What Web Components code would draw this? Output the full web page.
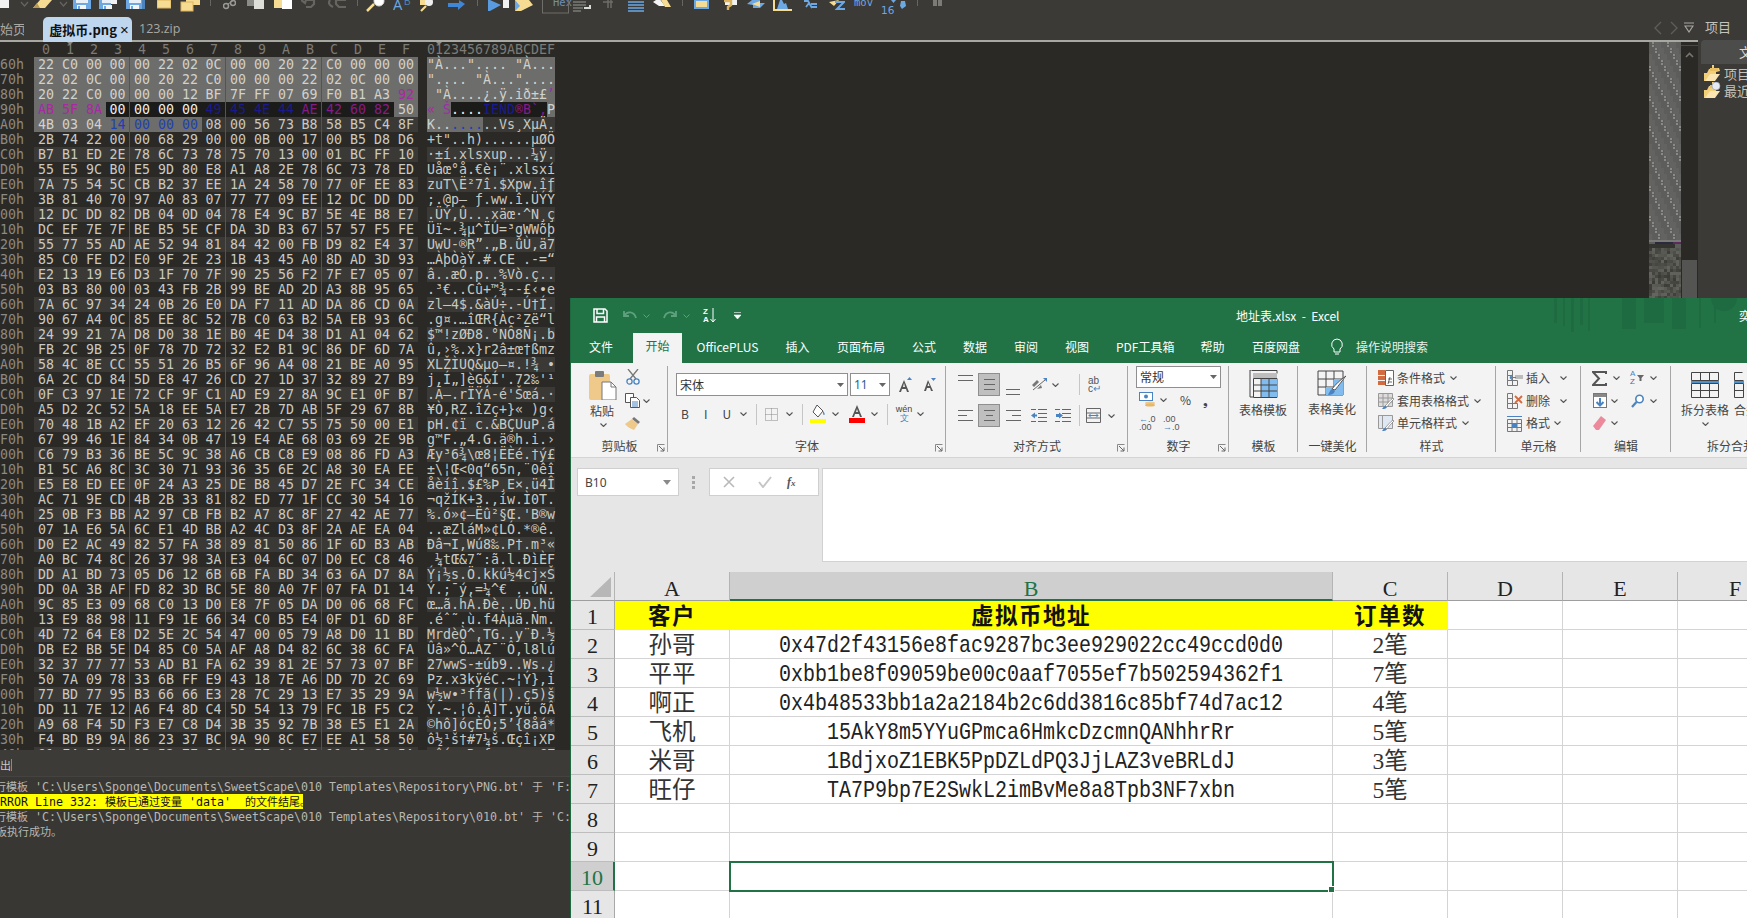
<!DOCTYPE html>
<html><head><meta charset="utf-8"><title>010 Editor + Excel</title>
<style>
html,body{margin:0;padding:0;width:1747px;height:918px;overflow:hidden;background:#2a2926}
body{position:relative;font-family:"Noto Sans CJK SC","Noto Sans",sans-serif}
</style></head><body>
<ed-app></ed-app>
<excel-window></excel-window>
<script>
function def(name,css,html,init){customElements.define(name,class extends HTMLElement{connectedCallback(){if(this.shadowRoot)return;const s=this.attachShadow({mode:'open'});s.innerHTML='<style>'+css+'</style>'+html(this);if(init)init(s,this);}});}
const CJK='"Noto Sans CJK SC","Noto Sans",sans-serif';
const svg=(w,h,b,st='')=>`<svg width="${w}" height="${h}" viewBox="0 0 ${w} ${h}" style="flex:none;display:block;${st}">${b}</svg>`;
/* ---------- 010 toolbar ---------- */
const chev='<path d="M1 2l3.5 4L8 2" fill="none" stroke="#66655f" stroke-width="1.2"/>';
const bs='#6ea8e2',yl='#f6dc92',yd='#dcb35c';
const floppy=(x=0)=>`<rect x="${x}" width="18" height="9" fill="${bs}"/><rect x="${x+3}" width="12" height="3" fill="#e8eff6"/><rect x="${x+4}" y="5" width="9" height="4" fill="#f4f4f4"/><rect x="${x+5}" y="6" width="2" height="3" fill="${bs}"/>`;
const tbItems=[
[0,9,'<rect width="9" height="8" fill="#f2f2f2"/>'],[20,9,chev],
[33,19,'<path d="M0 8L7 0h12l-7 8z" fill="'+yl+'"/><path d="M0 8l4-5 3 5z" fill="#b9995a"/>'],[59,9,chev],
[73,18,floppy()],[99,18,floppy().replace('width="18"','width="12"')+'<rect x="12" width="6" height="4" fill="#f2f2f2"/>'],
[126,19,floppy()+'<rect x="16" width="3" height="9" fill="#4d83bb"/>'],
[157,14,'<rect width="14" height="8" fill="'+yl+'" stroke="'+yd+'"/>'],
[180,20,'<rect x="6" width="14" height="5" fill="'+yl+'"/><rect y="2" x="1" width="12" height="9" fill="'+yl+'" stroke="'+yd+'"/>'],
[210,1,'<rect width="1" height="6" fill="#66655f"/>'],
[223,13,'<circle cx="3" cy="6" r="2.5" fill="none" stroke="#9a9a96" stroke-width="1.5"/><circle cx="10" cy="3" r="2.5" fill="none" stroke="#9a9a96" stroke-width="1.5"/><path d="M5 4l6 -4" stroke="#9a9a96"/>'],
[247,17,'<rect width="9" height="6" fill="#8b8b87"/><rect x="7" width="10" height="9" fill="#dfdfda"/>'],
[274,18,'<rect width="10" height="8" fill="'+yl+'"/><rect x="8" width="10" height="9" fill="#fff"/>'],
[301,15,'<path d="M0 0l4 3 1-3h8v4l-3 3H5" fill="none" stroke="#66655f" stroke-width="2.2"/>'],
[328,18,'<path d="M18 0h-10v4l3 3h7M2 0c-2 3 -1 5 3 7" fill="none" stroke="#66655f" stroke-width="2.2"/>'],
[357,1,'<rect width="1" height="6" fill="#66655f"/>'],
[366,19,'<circle cx="13" cy="1" r="5" fill="#fff" stroke="#ddd"/><path d="M1 11l7-7" stroke="'+yl+'" stroke-width="2.5"/>'],
[393,20,'<text x="0" y="10" font-family="Liberation Sans" font-size="14" fill="'+bs+'">A</text><text x="11" y="5" font-family="Liberation Sans" font-size="10" fill="#4d83bb">B</text>'],
[420,14,'<rect width="10" height="5" fill="'+yl+'"/><circle cx="9" cy="2" r="4" fill="#eee"/><path d="M1 11l5-5" stroke="'+yl+'" stroke-width="2.2"/>'],
[448,17,'<path d="M0 3h11V0l6 4-7 6V7H0z" fill="#3f86d6"/>'],
[477,1,'<rect width="1" height="6" fill="#66655f"/>'],
[488,13,'<path d="M0 0h2l11 5-11 6H0z" fill="#5a9be0"/>'],[503,7,'<rect width="6" height="8" fill="#f2f2f2"/>'],
[515,18,'<path d="M0 0h14l4 5-12 6H0z" fill="'+yl+'"/><path d="M0 0l5 6-5 5z" fill="'+bs+'"/>'],
[542,1,'<rect width="1" height="6" fill="#66655f"/>'],
[549,27,'<rect x=".5" y="-2" width="26" height="15" fill="none" stroke="#6e6d67"/>'],
[580,18,'<path d="M0 2h13M0 5h13M0 8h10M0 11h8" stroke="#9a9a96"/><path d="M17 5v3h-6" fill="none" stroke="#dcdcd6" stroke-width="2"/>'],
[610,10,'<path d="M0 2h10M5 0v8M8 0v8" stroke="#6e6d67" stroke-width="1.5"/>'],
[635,16,'<path d="M0 2h16M0 5h16M0 8h16M0 11h16" stroke="'+bs+'" stroke-width="1.4"/>'],
[660,18,'<path d="M0 2l6-4 6 8H6z" fill="#f4f4f4"/><path d="M8 0l6 0 4 7H12z" fill="'+yl+'"/>'],
[689,1,'<rect width="1" height="6" fill="#66655f"/>'],
[701,15,'<rect width="15" height="9" fill="'+bs+'"/><path d="M2 1h11v6H2z" fill="'+yl+'"/>'],
[728,16,'<rect x="4" width="12" height="5" fill="#f2f2f2"/><path d="M3 1h7v4l-3 2v3" fill="none" stroke="'+yd+'" stroke-width="2.4"/>'],
[754,18,'<path d="M0 4l5-4h8v3l5 0-5 5H6V5z" fill="'+bs+'"/><path d="M5 4l8-3v6z" fill="'+yl+'"/>'],
[780,20,'<path d="M1 0v10h18" fill="none" stroke="'+yl+'" stroke-width="2"/><path d="M4 9l3-9h2l2 4 2-1 2 6z" fill="'+bs+'"/>'],
[810,15,'<path d="M1 1h4l4 7M3 7l3-4M8 4h6M8 7h6" fill="none" stroke="'+bs+'" stroke-width="1.8"/>'],
[836,16,'<path d="M0 2l5 4 5-6z" fill="'+yl+'"/><path d="M6 2h9l-7 7h8" fill="none" stroke="'+bs+'" stroke-width="2"/>'],
[888,20,'<path d="M14 9l4-3 -1-5-4 0-1 5z" fill="'+bs+'"/><path d="M3 0h5l-2.5 3z" fill="'+bs+'"/>'],
[917,1,'<rect width="1" height="6" fill="#66655f"/>'],
[933,9,'<rect width="4" height="6" fill="#7c7b76"/><rect x="5" width="4" height="6" fill="#7c7b76"/>'],
];
def('ed-toolbar',':host{display:flex;height:16px;background:#3b3a36;overflow:hidden;position:relative}span{flex:none;font:10.5px "DejaVu Sans Mono",monospace;color:#6ea8e2;line-height:10px;height:10px}.hex{margin-top:-3px}',()=>{
 let p=0,o='';
 for(const[x,w,b]of tbItems){
  if(x===549){o+=`<span class="hex" style="margin-left:${x-p+4}px;width:20px;color:#6f8fb2;margin-right:-${w-4-20+4}px">Hex</span>`;o+=svg(w,16,b,`margin-left:-24px`);p=x+w;continue;}
  if(x===888){o+=`<span style="margin-left:${861-p}px;width:20px;margin-top:-3px">mov</span>`;p=881;o+=`<span style="margin-left:7px;width:0;margin-top:5px;font-family:'DejaVu Sans'">16</span>`;}
  o+=svg(w,16,b,`margin-left:${x-p}px`);p=x+w;}
 return o;});
/* ---------- tabs ---------- */
def('ed-tabs',`:host{display:flex;height:24px;background:#3b3a36;border-bottom:2px solid #a8a8a3;align-items:center;font:13px ${CJK};color:#a9a8a2}
.home{width:24px;margin-left:0;overflow:hidden;white-space:nowrap}
.act{width:89px;height:25px;margin:1px 0 -2px 19px;background:#bfd6ef;border-radius:5px 5px 0 0;color:#111;font-weight:700;display:flex;align-items:center;justify-content:center;gap:3px;font-size:13px;box-sizing:border-box;padding-left:3px}
.act i{font:400 15px "Liberation Sans";}
.z{margin-left:7px;font:12.5px "Open Sans",sans-serif;width:41px;white-space:nowrap}
.nav{margin-left:auto;display:flex;align-items:center;margin-right:4px}`,()=>`<span class="home">始页</span><span class="act">虚拟币.png<i>×</i></span><span class="z">123.zip</span>
<span class="nav">${svg(10,14,'<path d="M8 1L2 7l6 6" fill="none" stroke="#5e5d58" stroke-width="1.4"/>')}${svg(10,14,'<path d="M2 1l6 6-6 6" fill="none" stroke="#5e5d58" stroke-width="1.4"/>','margin-left:6px')}${svg(10,12,'<path d="M0 1h10M1 4l4 6 4-6z" fill="none" stroke="#a8a7a2" stroke-width="1.2"/>','margin-left:5px')}</span>`);
/* ---------- hex view ---------- */
const HEX=`22 C0 00 00 00 22 02 0C 00 00 20 22 C0 00 00 00
22 02 0C 00 00 20 22 C0 00 00 00 22 02 0C 00 00
20 22 C0 00 00 00 12 BF 7F FF 07 69 F0 B1 A3 92
AB 5F 8A 00 00 00 00 49 45 4E 44 AE 42 60 82 50
4B 03 04 14 00 00 00 08 00 56 73 B8 58 B5 C4 8F
2B 74 22 00 00 68 29 00 00 0B 00 17 00 B5 D8 D6
B7 B1 ED 2E 78 6C 73 78 75 70 13 00 01 BC FF 10
55 E5 9C B0 E5 9D 80 E8 A1 A8 2E 78 6C 73 78 ED
7A 75 54 5C CB B2 37 EE 1A 24 58 70 77 0F EE 83
3B 81 40 70 97 A0 83 07 77 77 09 EE 12 DC DD DD
12 DC DD 82 DB 04 0D 04 78 E4 9C B7 5E 4E B8 E7
DC EF 7E 7F BE B5 5E CF DA 3D B3 67 57 57 F5 FE
55 77 55 AD AE 52 94 81 84 42 00 FB D9 82 E4 37
85 C0 FE D2 E0 9F 2E 23 1B 43 45 A0 8D AD 3D 93
E2 13 19 E6 D3 1F 70 7F 90 25 56 F2 7F E7 05 07
03 B3 80 00 03 43 FB 2B 99 BE AD 2D A3 8B 95 65
7A 6C 97 34 24 0B 26 E0 DA F7 11 AD DA 86 CD 0A
90 67 A4 0C 85 EE 8C 52 7B C0 63 B2 5A EB 93 6C
24 99 21 7A D8 D0 38 1E B0 4E D4 38 D1 A1 04 62
FB 2C 9B 25 0F 78 7D 72 32 E2 B1 9C 86 DF 6D 7A
58 4C 8E CC 55 51 26 B5 6F 96 A4 08 21 BE A0 95
6A 2C CD 84 5D E8 47 26 CD 27 1D 37 32 89 27 B9
0F C3 97 1E 72 CF 9F C1 AD E9 27 8A 9C E1 0F B7
A5 D2 2C 52 5A 18 EE 5A E7 2B 7D AB 5F 29 67 8B
70 48 1B A2 EF 20 63 12 26 42 C7 55 75 50 00 E1
67 99 46 1E 84 34 0B 47 19 E4 AE 68 03 69 2E 9B
C6 79 B3 36 BE 5C 9C 38 A6 CB C8 E9 08 86 FD A3
B1 5C A6 8C 3C 30 71 93 36 35 6E 2C A8 30 EA EE
E5 E8 ED EE 0F 24 A3 25 DE B8 45 D7 2E FC 34 CE
AC 71 9E CD 4B 2B 33 81 82 ED 77 1F CC 30 54 16
25 0B F3 BB A2 97 CB FB B2 A7 8C 8F 27 42 AE 77
07 1A E6 5A 6C E1 4D BB A2 4C D3 8F 2A AE EA 04
D0 E2 AC 49 82 57 FA 38 89 81 50 86 1F 6D B3 AB
A0 BC 74 8C 26 37 98 3A E3 04 6C 07 D0 EC C8 46
DD A1 BD 73 05 D6 12 6B 6B FA BD 34 63 6A D7 8A
DD 0A 3B AF FD 82 3D BC 5E 80 A0 7F 07 FA D1 14
9C 85 E3 09 68 C0 13 D0 E8 7F 05 DA D0 06 68 FC
13 E9 88 98 11 F9 1E 66 34 C0 B5 E4 0F D1 6D 8F
4D 72 64 E8 D2 5E 2C 54 47 00 05 79 A8 D0 11 BD
DB E2 BB 5E D4 85 C0 5A AF A8 D4 82 6C 38 6C FA
32 37 77 77 53 AD B1 FA 62 39 81 2E 57 73 07 BF
50 7A 09 78 33 6B FF E9 43 18 7E A6 DD 7D 2C 69
77 BD 77 95 B3 66 66 E3 28 7C 29 13 E7 35 29 9A
DD 11 7E 12 A6 F4 8D C4 5D 54 13 79 FC 1B F5 C2
A9 68 F4 5D F3 E7 C8 D4 3B 35 92 7B 38 E5 E1 2A
F4 BD B9 9A 86 23 37 BC 9A 90 8C E7 EE A1 58 50
81 F4 FA 0F 1B 52 7E 66 09 7E 0A 67 11 72 80 5A`.split('\n').map(l=>l.trim().split(' '));
const dec=new TextDecoder('windows-1252');
const ch=h=>{const b=parseInt(h,16);if(b<32||[0x7f,0x81,0x8d,0x8f,0x90,0x9d].includes(b))return'.';if(b===0xA0||b===0x20)return' ';if(b===0xAD)return'-';const c=dec.decode(new Uint8Array([b]));return c==='&'?'&amp;':c==='<'?'&lt;':c==='>'?'&gt;':c;};
const cellCls=(r,i)=>{if(r===2&&i===15)return's pu';if(r<3)return's';if(r===3){if(i<3)return's pu';if(i<7)return'd';if(i<11)return'd na';if(i<15)return'd pd';return's';}if(r===4&&i<7)return i>=3?'s bl':'s';return'';};
def('hex-view',`:host{display:block;background:#2a2926;overflow:hidden;font:13.28px/15px "DejaVu Sans Mono",monospace;color:#c9c9c2;white-space:pre;position:relative}
.r{display:flex;height:15px}.ad{width:34px;flex:none;color:#8b8a84;overflow:hidden}
.hx{display:flex;width:384px;flex:none}.hx b{font-weight:400;width:24px;text-align:center;flex:none;box-sizing:border-box}
.hx b:nth-child(4),.hx b:nth-child(8),.hx b:nth-child(12){border-right:1px solid #55544f}
.as{margin-left:9px;display:flex;flex:none;width:128px}.as b{font-weight:400;width:8px;flex:none;overflow:visible;text-align:center}
.alt .hx,.alt .as{background:#3a3936}
.s{background:#6d6d6b;color:#d2d2cc}.d{background:#1b1b1a;color:#f0f0ea}.pu{color:#a62aa6}.na{color:#1a1a8e}.pd{color:#861a86}.bl{color:#1f3fb5}
.head{color:#7c7b75}.head .hx b{border:0}.caret{position:absolute;top:0;width:0;height:0;border:3px solid transparent;border-top:3px solid #8c8b85}`,()=>{
 let o='<div class="r head"><span class="ad"></span><span class="hx">'+[...'0123456789ABCDEF'].map(c=>`<b>${c}</b>`).join('')+'</span><span class="as">'+[...'0123456789ABCDEF'].map(c=>`<b>${c}</b>`).join('')+'</span></div><i class="caret" style="left:67px"></i><i class="caret" style="left:436px"></i>';
 HEX.forEach((row,r)=>{const a=((0x60+16*r)&255).toString(16).toUpperCase().padStart(2,'0')+'h';
  o+=`<div class="r ${r%2?'':'alt'}"><span class="ad">${a}</span><span class="hx">${row.map((h,i)=>`<b class="${cellCls(r,i)}">${h}</b>`).join('')}</span><span class="as">${row.map((h,i)=>`<b class="${cellCls(r,i)}">${ch(h)}</b>`).join('')}</span></div>`;});
 return o;});
/* ---------- output ---------- */
def('ed-output',`:host{display:block;height:168px;background:#383734;font:11.63px/15px "DejaVu Sans Mono",monospace;color:#b9b8b1;overflow:hidden}
.h{height:27px;background:#3c3b37;border-bottom:1px solid #44433f;font:11px/26px ${CJK};color:#c9c8c1;margin-bottom:2px;box-sizing:border-box}
.h span{display:inline-block;padding-right:0;border-right:1px solid #8a8983;line-height:12px;vertical-align:middle}
.l{height:15px;white-space:pre}.c{font:11px/15px ${CJK}}.e{background:#ff0;color:#111;width:303px;overflow:hidden}`,()=>`<div class="h"><span>出</span></div>
<div class="l" style="margin-left:-5px"><span class="c">行模板</span> 'C:\\Users\\Sponge\\Documents\\SweetScape\\010 Templates\\Repository\\PNG.bt' <span class="c">于</span> 'F:</div>
<div class="l e">RROR Line 332: <span class="c">模板已通过变量</span> 'data'  <span class="c">的文件结尾。</span></div>
<div class="l" style="margin-left:-5px"><span class="c">行模板</span> 'C:\\Users\\Sponge\\Documents\\SweetScape\\010 Templates\\Repository\\010.bt' <span class="c">于</span> 'C:</div>
<div class="l" style="margin-left:-4px"><span class="c">板执行成功。</span></div>`);
/* ---------- scroll map ---------- */
def('scroll-map',':host{display:block;width:32px;height:100%;background:#5d5d5b;overflow:hidden}',()=>{
 let o='';let seed=7;const rnd=()=>(seed=(seed*16807)%2147483647)/2147483647;
 for(let y=0;y<198;y+=3)for(let x=0;x<32;x+=3){const d=((x/3)-Math.floor(y/6)+64)%5;
   if(d===0)o+=`<rect x="${x}" y="${y}" width="2" height="2" fill="#8a8a87"/>`;else if(d===1||d===2)o+=`<rect x="${x}" y="${y}" width="3" height="3" fill="#636361"/>`;}
 o+='<rect y="198" width="32" height="2" fill="#7a7a78"/><rect x="6" y="200" width="26" height="2" fill="#2a2a3c"/><rect x="24" y="200" width="8" height="2" fill="#5c2a5c"/><rect y="202" width="26" height="4" fill="#333330"/>';
 for(let y=206;y<256;y+=3)for(let x=0;x<32;x+=3){const v=60+Math.floor(rnd()*42);o+=`<rect x="${x}" y="${y}" width="3" height="3" fill="rgb(${v},${v},${v-6})"/>`;}
 return svg(32,256,o);});
def('scroll-bar',`:host{display:block;width:17px;height:100%;background:#2a2926;position:relative;border-top:1px solid #4a4945;margin-top:3px;box-sizing:border-box}
.t{margin:202px 1px 0;height:40px;background:#545452}`,()=>svg(9,6,'<path d="M1 5l3.5-3.5L8 5" fill="none" stroke="#77766f" stroke-width="1.6"/>','margin:6px auto 0')+'<div class="t"></div>');
/* ---------- side panel ---------- */
const folder=(x='')=>svg(17,17,`<path d="M0 8h3l2-4 3 0 0-4 2 0 0 3 5 0 1 3-4 1 0 0 L12 14 L2 16 H0z" fill="#f3cf78"/><path d="M1 16l5-7h10l-5 7z" fill="#fbe6b2"/><path d="M6 3h8v3H6z" fill="#e8be62"/>${x}`);
def('side-panel',`:host{display:block;width:49px;flex:none;background:#3b3a36;font:13px ${CJK};color:#c4c3bd;overflow:hidden;white-space:nowrap}
.t{height:24px;line-height:22px;padding-left:7px}.tab{height:24px;margin-left:3px;background:#4c4c4a;border-radius:4px 0 0 0;padding-left:38px;line-height:24px;color:#dcdcd6;overflow:hidden}
.i{display:flex;align-items:center;height:17px;padding-left:6px;gap:3px}`,()=>`<div class="t">项目</div><div class="tab">文件</div><div class="i" style="margin-top:1px">${folder()}<span>项目</span></div><div class="i">${folder('<circle cx="12" cy="4" r="4" fill="#e6eaf2" stroke="#8a97b0" stroke-width=".6"/>')}<span>最近</span></div>`);
def('ed-app',`:host{display:block;width:1747px;height:918px;background:#2a2926}
.b{display:flex;height:902px}.l{width:1698px;flex:none;display:flex;flex-direction:column}
.m{display:flex;height:876px}.c{width:1649px;flex:none;display:flex;flex-direction:column}
hex-view{flex:1;min-height:0}`,()=>`<ed-toolbar></ed-toolbar><div class="b"><div class="l"><ed-tabs></ed-tabs><div class="m"><div class="c"><hex-view></hex-view><ed-output></ed-output></div><scroll-map></scroll-map><scroll-bar></scroll-bar></div></div><side-panel></side-panel></div>`);
/* ---------- Excel ribbon ---------- */
const dd=(ml=0)=>svg(7,4,'<path d="M.5 .5L3.5 3.5 6.5 .5" fill="none" stroke="#555" stroke-width="1.1"/>',`margin-left:${ml}px`);
const tri=(ml=0)=>svg(7,4,'<path d="M0 0h7L3.5 4z" fill="#666"/>',`margin-left:${ml}px`);
const vsep=(ml)=>`<i style="flex:none;display:block;width:1px;height:21px;background:#c6c6c6;margin-left:${ml}px"></i>`;
const B='#4a83bf',G='#555';
const ic={
paste:svg(28,29,`<rect x="0" y="3" width="21" height="26" rx="2" fill="#eec98a"/><rect x="6" y="0" width="9" height="6" rx="1" fill="#7b7b7b"/><path d="M13 11h9l5 5v13H13z" fill="#fff" stroke="#777"/><path d="M22 11v5h5" fill="none" stroke="#777"/>`),
cut:svg(14,16,`<path d="M2 0l8 10M12 0L4 10" stroke="#777" stroke-width="1.3"/><circle cx="3.5" cy="12.5" r="2.6" fill="none" stroke="${B}" stroke-width="1.3"/><circle cx="10.5" cy="12.5" r="2.6" fill="none" stroke="${B}" stroke-width="1.3"/>`),
copy:svg(15,15,`<path d="M.5 .5h8v9h-8z" fill="#fff" stroke="#555"/><path d="M5.5 4.5h6l3 3v7h-9z" fill="#fff" stroke="#555"/><path d="M7 9h6M7 11h6M7 13h6" stroke="${B}"/>`),
brush:svg(16,15,`<path d="M9 1l6 5-2 2-6-5z" fill="#777"/><path d="M7 3l6 5-4 6C6 13 2 11 0 8z" fill="#eec98a"/>`),
bd:svg(13,13,`<path d="M.5 .5h12v12H.5zM6.5 .5v12M.5 6.5h12" fill="none" stroke="#888" stroke-dasharray="1 1"/>`),
fill:svg(16,18,`<path d="M7 0l6 6-5 6-5-5z" fill="#fff" stroke="#555"/><path d="M13 6c2 2 2 4 1 4-1 0-1-2-1-4z" fill="${B}"/><rect y="14" width="16" height="4" fill="#ff0"/>`),
fontc:svg(16,18,`<path d="M8 0L3 12h2l1-3h4l1 3h2zM7 7l1-3 1 3z" fill="#555"/><rect y="13" width="16" height="5" fill="#f00"/>`),
lines:(a)=>svg(15,12,a.map(([x,w],i)=>`<rect x="${x}" y="${i*5}" width="${w}" height="1" fill="#666"/>`).join('')),
orient:svg(17,17,`<path d="M2 14L14 4" stroke="#666"/><path d="M12 2l4 0 0 4z" fill="${B}"/><path d="M1 9l5-5 2 2-5 5zM6 13l4-4 1 3z" fill="#777"/>`),
ind:(r)=>svg(16,13,`<path d="M7 .5h9M7 4.5h9M7 8.5h9M7 12.5h9M0 .5h5M0 12.5h5" stroke="#666"/><path d="${r?'M1 5v3h4V5h0l-4 0M8 6.5L4 3.5v6z':'M0 6.5L4 3.5v6zM3 5.5h3v2H3z'}" fill="${B}"/>`),
merge:svg(15,15,`<path d="M.5 .5h14v14H.5zM.5 5h14M.5 10h14" fill="none" stroke="#666"/><path d="M3 7.5h9M3 7.5l2-2M3 7.5l2 2M12 7.5l-2-2M12 7.5l-2 2" stroke="${B}" fill="none"/>`),
acct:svg(17,15,`<rect x=".5" y=".5" width="13" height="8" fill="#fff" stroke="${B}"/><circle cx="7" cy="4.5" r="2" fill="${B}"/><ellipse cx="11" cy="11" rx="5" ry="1.6" fill="#eec98a"/><ellipse cx="11" cy="13" rx="5" ry="1.6" fill="#e5b86a"/>`),
tmpl:svg(29,28,`<path d="M4 0H1v27h3" fill="none" stroke="#444"/><path d="M3 .5h25v3" fill="none" stroke="#444"/><rect x="4" y="3" width="24" height="5" fill="#bdbdbd"/><path d="M4.5 8.5h23.5v19H4.5z" fill="none" stroke="#444"/><rect x="12" y="9" width="16" height="18" fill="#82bbee"/><path d="M12 9v18M20 9v18M4 15h24M4 21h24" stroke="#444" fill="none"/>`),
beaut:svg(31,27,`<path d="M1 1h25v24H1zM9 1v24M17 1v24M1 9h25M1 17h25" fill="none" stroke="#444"/><rect x="17" y="9" width="9" height="16" fill="#82bbee"/><rect x="9" y="17" width="8" height="8" fill="#82bbee"/><path d="M28 7c-3 4-6 8-10 13l-3-1C18 15 24 9 29 6z" fill="#fff" stroke="#555"/><path d="M15 19l3 2c-1 3-4 4-7 4 1-2 2-5 4-6z" fill="${B}"/>`),
cond:svg(16,16,`<rect y="0" width="7" height="5" fill="#d36b41"/><rect y="6" width="7" height="4" fill="#d36b41"/><rect y="11" width="7" height="4" fill="#d36b41"/><path d="M7.5 .5h8v15h-8z" fill="#fff" stroke="#666"/><path d="M10 9h4M10 12h4M12 7l-2 7" stroke="#444" stroke-width=".8"/>`),
tbs:svg(16,16,`<path d="M.5 .5h14v13H.5zM5 .5v13M10 .5v13M.5 5h14M.5 9h14" fill="#ddd" stroke="#999"/><path d="M16 6c-3 3-5 5-7 8l-2-1c3-3 5-6 8-8z" fill="#fff" stroke="#666" stroke-width=".6"/><path d="M7 13l2 1c-1 2-3 2-5 2 1-1 1-2 3-3z" fill="${B}"/>`),
cells:svg(16,16,`<path d="M.5 .5h14v13H.5z" fill="#dfe7f2" stroke="#999"/><path d="M.5 .5h4v13" fill="none" stroke="#999"/><path d="M16 6c-3 3-5 5-7 8l-2-1c3-3 5-6 8-8z" fill="#fff" stroke="#666" stroke-width=".6"/><path d="M7 13l2 1c-1 2-3 2-5 2 1-1 1-2 3-3z" fill="${B}"/>`),
ins:svg(16,16,`<path d="M.5 .5h5v5h-5zM.5 5.5h5v5h-5zM.5 10.5h5v5h-5zM5.5 10.5h5v5h-5z" fill="none" stroke="#777"/><rect x="8" y="5" width="8" height="4" fill="#bbb"/><path d="M3 7.5h6M3 7.5l2.5-2.5M3 7.5l2.5 2.5" stroke="${B}" fill="none" stroke-width="1.2"/>`),
del:svg(16,16,`<path d="M.5 .5h5v5h-5zM.5 5.5h5v5h-5zM.5 10.5h5v5h-5zM5.5 10.5h5v5h-5z" fill="none" stroke="#777"/><path d="M8 3l7 7M15 3l-7 7" stroke="#d36b41" stroke-width="1.8"/>`),
fmt:svg(16,17,`<path d="M.5 4.5h14v12H.5zM5 4.5v12M10 4.5v12M.5 8.5h14M.5 12.5h14" fill="none" stroke="#777"/><rect x="5" y="8" width="5" height="5" fill="${B}"/><path d="M0 1.5h15" stroke="${B}"/>`),
sigma:svg(15,15,`<path d="M14 3V1H1l6 6.5L1 14h13v-2" fill="none" stroke="#555" stroke-width="2"/>`),
filld:svg(14,15,`<rect x=".5" y=".5" width="13" height="14" fill="#fff" stroke="#777"/><rect x="1" y="1" width="12" height="3" fill="#888"/><path d="M7 5v7M3.5 9L7 12.5 10.5 9" stroke="${B}" stroke-width="2" fill="none"/>`),
find:svg(13,14,`<circle cx="8.5" cy="5" r="3.7" fill="#fff" stroke="${B}" stroke-width="1.6"/><path d="M5.5 8L1 13" stroke="${B}" stroke-width="2.2"/>`),
eraser:svg(13,14,`<path d="M8 0l5 4-7 10H3L0 10z" fill="#ec8a9c"/>`),
split:svg(28,26,`<path d="M.5 .5h27v8H.5zM9.5 .5v8M18.5 .5v8M.5 11.500h27v14H.5zM.5 18.500h27M9.5 11.500v14M18.5 11.500v14" fill="none" stroke="#444"/><path d="M0 10h28" stroke="#2a7ac0" stroke-width="1.6"/>`),
launcher:svg(8,8,`<path d="M.5 .5h7v7" fill="none" stroke="#888" transform="rotate(-90 4 4)"/><path d="M2 2l5 5M7 3.5V7H3.5" fill="none" stroke="#666"/>`),
};
def('r-group',`:host{display:flex;flex:none;flex-direction:column;height:94px;position:relative;box-sizing:border-box;font:12px/16px ${CJK};color:#444;white-space:nowrap}
:host::after{content:"";position:absolute;right:0;top:3px;height:86px;width:1px;background:#a6a6a6}
.c{height:75px;padding-top:3px;box-sizing:border-box}
.lb{text-align:center;line-height:16px;height:16px}
.k{position:absolute;right:3px;bottom:5px;display:block}`,h=>`<div class="c"><slot></slot></div><div class="lb" style="${h.getAttribute('lbstyle')||''}">${h.getAttribute('label')}</div>${h.hasAttribute('launcher')?'<span class="k">'+ic.launcher+'</span>':''}`);
const rowCss=`.row{display:flex;align-items:center}`;
const big=(i,t,w,pt=4)=>`<div style="width:${w}px;display:flex;flex-direction:column;align-items:center;padding-top:${pt}px">${i}<div style="margin-top:4px;font:12px/16px ${CJK};color:#444">${t}</div></div>`;
const st=(ml,i,t,d,extra='')=>`<div class="row" style="height:22.5px;padding-left:11px;${extra}">${i}<span style="margin-left:3px">${t}</span>${d}</div>`;
const txt=(ml,t,s='')=>`<span style="margin-left:${ml}px;flex:none;${s}">${t}</span>`;
const sel=(ml,w,inner)=>`<span style="flex:none;margin-left:${ml}px;width:22px;height:23px;box-sizing:border-box;background:#bfbfbf;border:1px solid #8f8f8f;display:flex;align-items:center;justify-content:center">${inner}</span>`;
const mi=(ml,s)=>s.replace('style="','style="margin-left:'+ml+'px;');
def('x-ribbon',`:host{display:flex;height:94px;background:#f3f3f3;border-bottom:1px solid #d4d4d4;box-sizing:content-box;font:12px/16px ${CJK};color:#444}
${rowCss}
.box{flex:none;box-sizing:border-box;background:#fff;border:1px solid #8f8f8f;height:23px;display:flex;align-items:center;padding:0 3px;font-size:12px;justify-content:space-between;color:#333}`,()=>`
<r-group label="剪贴板" launcher style="width:97px"><div class="row" style="align-items:flex-start">
 <div style="margin-left:18px;width:28px;display:flex;flex-direction:column;align-items:center;padding-top:5px">${ic.paste}<div style="margin-top:3px;width:26px;font-size:12px">粘贴</div><div style="margin-top:4px">${dd()}</div></div>
 <div style="margin-left:8px;padding-top:3px;width:30px;">${mi(1,ic.cut)}<div class="row" style="margin-top:8px">${ic.copy}${dd(3)}</div><div style="margin-top:8px">${ic.brush}</div></div>
</div></r-group>
<r-group label="字体" launcher style="width:278px">
 <div class="row" style="margin-top:7px;height:23px"><span class="box" style="margin-left:8px;width:172px">宋体${tri()}</span><span class="box" style="margin-left:2px;width:40px"><span style="font-family:'Noto Sans';color:#2a5d90">11</span>${tri()}</span>
 ${mi(8,svg(14,15,`<path d="M6 3L1 15h2l1-3h4l1 3h2zM5 10l1-4 1 4z" fill="#555"/><path d="M9 3l2.5-3L14 3z" fill="${B}"/>`))}${mi(11,svg(13,13,`<path d="M5 2L1 13h2l1-3h3l1 3h2zM4.5 8l1-3 1 3z" fill="#555"/><path d="M8 0h5l-2.500 3z" fill="${B}"/>`))}</div>
 <div class="row" style="margin-top:8px;height:20px">
 ${txt(13,'B','font:700 14px "Liberation Sans";width:11px;color:#444')}${txt(15,'I','font:italic 700 14px "Liberation Serif";width:8px;color:#555;text-align:center')}${txt(15,'U','font:700 13px "Liberation Sans";width:11px;border-bottom:1px solid #444;line-height:13px;color:#444')}${dd(9)}${vsep(9)}${mi(8,ic.bd)}${dd(8)}${vsep(9)}${mi(7,ic.fill)}${dd(6)}${mi(10,ic.fontc)}${dd(6)}${vsep(9)}
 <span style="margin-left:8px;width:16px;flex:none;display:flex;flex-direction:column;align-items:center;font:9px/9px 'Liberation Sans';color:#444">wén<span style="color:${B};font:10px/9px ${CJK}">文</span></span>${dd(5)}</div>
</r-group>
<r-group label="对齐方式" launcher style="width:182px">
 <div class="row" style="margin-top:7px;height:23px">${mi(12,ic.lines([[0,15],[0,15],[0,0]]).replace('style="','style="align-self:flex-start;margin-top:2px;'))}${sel(5,22,ic.lines([[2,11],[2,11],[2,11]]))}${mi(6,ic.lines([[0,0],[0,14],[0,14]]).replace('style="','style="align-self:flex-end;'))}${mi(10,ic.orient)}${dd(4)}${vsep(20)}
 <span style="margin-left:8px;flex:none;width:13px;font:10px/8px 'Liberation Sans';color:#555;text-align:left">ab<br>c<span style="color:${B}">↵</span></span></div>
 <div class="row" style="margin-top:8px;height:23px">${mi(12,ic.lines([[0,15],[0,9],[0,15]]))}${sel(5,22,ic.lines([[2,11],[4,7],[2,11]]))}${mi(6,ic.lines([[0,15],[6,9],[0,15]]))}${mi(10,ic.ind(0))}${mi(8,ic.ind(1))}${vsep(8)}${mi(6,ic.merge)}${dd(7)}</div>
</r-group>
<r-group label="数字" launcher style="width:101px">
 <span class="box" style="margin-left:8px;width:85px;height:22px;display:flex">常规${tri()}</span>
 <div class="row" style="margin-top:4px;height:15px">${mi(11,ic.acct)}${dd(4)}${txt(13,'%','font:16px "Liberation Sans";width:14px;color:#555')}${txt(12,'❟','font:700 15px "DejaVu Sans";color:#555')}</div>
 <div class="row" style="margin-top:8px;height:16px"><span style="margin-left:11px;width:15px;flex:none;font:9px/8px 'Liberation Sans';color:#555"><span style="color:${B}">←</span>.0<br>.00</span><span style="margin-left:9px;width:16px;flex:none;font:9px/8px 'Liberation Sans';color:#555">.00<br><span style="color:${B}">→</span>.0</span></div>
</r-group>
<r-group label="模板" style="width:69px">${big(ic.tmpl,'表格模板',68)}</r-group>
<r-group label="一键美化" style="width:69px">${big(ic.beaut,'表格美化',68)}</r-group>
<r-group label="样式" style="width:129px">
 ${st(11,ic.cond,'条件格式',dd(5),'margin-top:1px')}${st(11,ic.tbs,'套用表格格式',dd(5))}${st(11,ic.cells,'单元格样式',dd(5))}</r-group>
<r-group label="单元格" style="width:85px">
 ${st(11,ic.ins,'插入',dd(10),'margin-top:1px')}${st(11,ic.del,'删除',dd(10))}${st(11,ic.fmt,'格式',dd(4))}</r-group>
<r-group label="编辑" style="width:90px">
 <div class="row" style="height:22.5px;margin-top:1px">${mi(11,ic.sigma)}${dd(6)}<span style="margin-left:10px;width:17px;flex:none;display:flex;align-items:center;font:8px/8px 'Liberation Sans';color:${B}"><span>A<br><span style="color:#7a4fb5">Z</span></span>${svg(7,6,'<path d="M0 0h7L4.500 3v3l-2 0V3z" fill="#666"/>','margin-left:2px')}</span>${dd(3)}</div>
 <div class="row" style="height:22.5px">${mi(12,ic.filld)}${dd(4)}${mi(13,ic.find)}${dd(6)}</div>
 <div class="row" style="height:22.5px">${mi(12,ic.eraser)}${dd(5)}</div>
</r-group>
<r-group label="拆分合并" lbstyle="text-align:left;padding-left:36px" style="width:90px"><div class="row" style="align-items:flex-start">
 <div style="margin-left:10px;width:48px;display:flex;flex-direction:column;align-items:center;padding-top:6px">${ic.split}<div style="margin-top:4px;">拆分表格</div><div style="margin-top:4px">${dd()}</div></div>
 <div style="margin-left:5px;padding-top:6px">${svg(10,26,'<path d="M8.500 .5H.5v8h9M.5 11.500h9v14H.5zM.5 18.500h9" fill="none" stroke="#444"/><path d="M0 10h10" stroke="#2a7ac0" stroke-width="1.6"/>')}<div style="margin-top:4px">合并</div></div></div>
</r-group>`);
/* ---------- title + tabs ---------- */
const tabs=[['文件',589,24],['开始',633,49,1],['OfficePLUS',696,63],['插入',785,25],['页面布局',837,48],['公式',912,24],['数据',963,24],['审阅',1014,24],['视图',1065,24],['PDF工具箱',1116,58],['帮助',1200,25],['百度网盘',1252,48]];
def('x-title',`:host{display:block;background:#217346;color:#fff;font:12px/16px ${CJK};white-space:nowrap;position:relative;overflow:hidden}
.t{display:flex;height:35px;align-items:center;box-sizing:border-box}
.w{position:absolute;left:983px;top:0;opacity:.9}
.tabs{display:flex;height:30px;align-items:center;padding-bottom:0}
.tabs span{flex:none;text-align:center;position:relative;top:-1px}.tabs .on{top:0;background:#f3f3f3;color:#217346;height:30px;line-height:26px}
.tabs svg{position:relative;top:-1px}.q{font-size:12px}`,()=>{
 let p=571,o='';
 for(const[t,x,w,on]of tabs){o+=`<span class="${on?'on':''}" style="margin-left:${x-p}px;width:${w}px;${t==='OfficePLUS'||t.startsWith('PDF')?'font-family:Roboto,'+CJK+';':''}">${t}</span>`;p=x+w;}
 o+=svg(14,18,'<path d="M7 1a5.500 5.500 0 0 0-3 10v3h6v-3A5.500 5.500 0 0 0 7 1zM5 16h4" fill="none" stroke="#fff" stroke-width="1"/>',`margin-left:${1330-p}px`);p=1344;
 o+=`<span class="q" style="margin-left:${1356-p}px;width:72px;opacity:.9">操作说明搜索</span>`;
 let wm='';[[0,3],[9,2],[17,3],[26,3],[34,2],[68,14],[90,20],[118,14],[145,2],[160,2]].forEach(([x,w])=>wm+=`<rect x="${x}" y="0" width="${w}" height="${25+((x*7)%10)}" fill="#1e6b41"/>`);
 return `<div class="w">${svg(193,36,wm+'<circle cx="170" cy="0" r="13" fill="#1e6b41"/>')}</div>
 <div class="t">
 ${svg(15,15,'<path d="M1 1h11l2 2v11H1zM4 1v4.500h6.500V1M3.500 14V9h8v5" fill="none" stroke="#fff" stroke-width="1.500"/>','margin-left:22px')}
 ${svg(14,13,'<path d="M1 2v5h5M1.500 6.500C4 2 11 2 13 9" fill="none" stroke="#5fa07f" stroke-width="1.800"/>','margin-left:15px')}
 ${svg(7,4,'<path d="M.5 .5l3 3 3-3" fill="none" stroke="#5fa07f"/>','margin-left:6px')}
 ${svg(14,13,'<path d="M13 2v5H8M12.500 6.500C10 2 3 2 1 9" fill="none" stroke="#5fa07f" stroke-width="1.800"/>','margin-left:13px')}
 ${svg(7,4,'<path d="M.5 .5l3 3 3-3" fill="none" stroke="#5fa07f"/>','margin-left:6px')}
 <span style="margin-left:13px;width:7px;font:700 8px/8px 'Liberation Sans';flex:none">Z<br>A</span>${svg(6,15,'<path d="M3 0v14M.5 11L3 14l2.500-3" fill="none" stroke="#fff"/>')}
 ${svg(7,7,'<path d="M0 .5h7M0 3h7L3.500 7z" fill="#fff" stroke="#fff" stroke-width=".6"/>','margin-left:18px')}
 <span style="margin-left:${1235-740}px;width:115px;flex:none">地址表.xlsx&nbsp; -&nbsp; Excel</span>
 <span style="margin-left:${1738-1350}px;">奕</span></div><div class="tabs">${o}</div>`;});
/* ---------- formula bar ---------- */
def('x-formula',`:host{display:flex;height:114px;background:#e6e6e6;padding-top:10px;box-sizing:border-box;align-items:flex-start;font:12px "Noto Sans",sans-serif;color:#444}
.n{margin-left:6px;width:102px;height:28px;box-sizing:border-box;background:#fff;border:1px solid #cfcfcf;display:flex;align-items:center;justify-content:space-between;padding:0 7px;}
.dots{margin-left:13px;margin-right:14px;width:3px;height:28px;display:flex;flex-direction:column;justify-content:center;gap:2px}.dots i{display:block;width:3px;height:3px;background:#a8a8a8}
.b{width:110px;height:28px;box-sizing:border-box;background:#fff;border:1px solid #cfcfcf;display:flex;align-items:center;color:#9a9a9a}
.f{margin-left:3px;width:960px;height:94px;background:#fff;border:1px solid #d2d2d2;border-right:0;box-sizing:border-box}`,()=>`<div class="n"><span>B10</span>${svg(8,5,'<path d="M0 0h8L4 5z" fill="#8a8a8a"/>')}</div><div class="dots"><i></i><i></i><i></i></div>
<div class="b">${svg(12,12,'<path d="M1 1l10 10M11 1L1 11" stroke="#b9b9b9" stroke-width="1.600"/>','margin-left:13px')}${svg(14,12,'<path d="M1 6l4 5 8-10" fill="none" stroke="#c6c6c6" stroke-width="2"/>','margin-left:23px')}<span style="margin-left:15px;font:italic 700 12px 'Liberation Serif';color:#555">f<span style="font-size:9px">x</span></span></div><div class="f"></div>`);
/* ---------- sheet ---------- */
const SDATA=[['孙哥','0x47d2f43156e8fac9287bc3ee929022cc49ccd0d0','2笔'],['平平','0xbb1be8f09059be00c0aaf7055ef7b502594362f1','7笔'],['啊正','0x4b48533bb1a2a2184b2c6dd3816c85bf74d7ac12','4笔'],['飞机','15AkY8m5YYuGPmca6HmkcDzcmnQANhhrRr','5笔'],['米哥','1BdjxoZ1EBK5PpDZLdPQ3JjLAZ3veBRLdJ','3笔'],['旺仔','TA7P9bp7E2SwkL2imBvMe8a8Tpb3NF7xbn','5笔']];
def('x-sheet',`:host{display:grid;grid-template-columns:44px 115px 603px 115px 115px 115px 115px;grid-auto-rows:29px;background:#fff;color:#333;font:23.5px/29px "Liberation Serif",${CJK},serif;overflow:hidden;white-space:nowrap}
.hd{background:#e6e6e6;border-right:1px solid #b4b4b4;border-bottom:1px solid #9e9e9e;box-sizing:border-box;text-align:center;font:22px/33px "Liberation Serif",serif;color:#222;overflow:hidden}
.hd.sel{background:#cfcfcf;color:#217346;border-bottom:2px solid #217346}
.rh{background:#e6e6e6;border-right:1px solid #a8a8a8;border-bottom:1px solid #bdbdbd;box-sizing:border-box;text-align:center;font:22px/31px "Liberation Serif",serif;color:#222;overflow:hidden}
.rh.sel{background:#cfcfcf;color:#217346;border-right:2px solid #217346}
.c{border-right:1px solid #d4d4d4;border-bottom:1px solid #d4d4d4;box-sizing:border-box;text-align:center;display:flex;align-items:center;justify-content:center;padding-top:3px}
.y{background:#ff0;border-color:#ff0;font-weight:700;color:#111;font-size:22.5px;letter-spacing:1.5px}
.m{display:inline-block;font:20px/26px "Liberation Mono",monospace;transform:scaleY(1.2);color:#222}
.cur{position:relative;outline:2px solid #217346;outline-offset:-1px;z-index:2}.cur::after{content:"";position:absolute;right:-3px;bottom:-3px;width:5px;height:5px;background:#217346;border:1px solid #fff}`,()=>{
 let o=`<div class="hd" style="padding-top:5px;line-height:0;display:block">${svg(21,20,'<path d="M21 0v20H0z" fill="#b7b7b7"/>','margin-left:19px')}</div>`;
 ['A','B','C','D','E','F'].forEach(c=>o+=`<div class="hd ${c==='B'?'sel':''}">${c}</div>`);
 for(let r=1;r<=11;r++){o+=`<div class="rh ${r===10?'sel':''}">${r}</div>`;
  const d=r===1?['客户','虚拟币地址','订单数']:(SDATA[r-2]||['','','']);
  const y=r===1?'y':'';
  o+=`<div class="c ${y}">${d[0]}</div><div class="c ${y} ${r===10?'cur':''}">${r>1&&d[1]?`<span class="m">${d[1]}</span>`:d[1]}</div><div class="c ${y}">${d[2]}</div><div class="c"></div><div class="c"></div><div class="c"></div>`;}
 return o;});
def('excel-window',`:host{display:block;position:absolute;left:570px;top:298px;width:1300px;height:620px;border-left:1px solid #1d6a40;background:#e6e6e6;overflow:hidden}`,()=>`<x-title></x-title><x-ribbon></x-ribbon><x-formula></x-formula><x-sheet></x-sheet>`);
</script>
</body></html>
